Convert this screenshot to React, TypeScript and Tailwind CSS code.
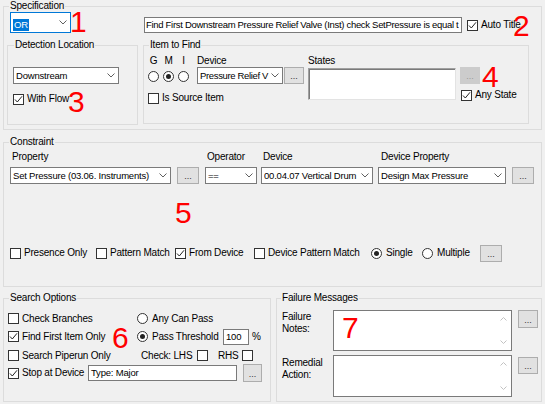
import React from "react";

const LBL = "text-[10px] leading-[12px] tracking-[-0.2px] whitespace-nowrap text-black";
const INP = "text-[9.5px] leading-[12px] tracking-[-0.2px] whitespace-nowrap text-black";

function Chevron() {
  return (
    <svg width="8" height="5" viewBox="0 0 8 5" className="shrink-0">
      <path d="M0.5 0.5L4 4L7.5 0.5" fill="none" stroke="#606060" strokeWidth="1" />
    </svg>
  );
}

function Combo({ cls, text, textCls = "" }: { cls: string; text: string; textCls?: string }) {
  return (
    <div className={`${cls} shrink-0 bg-white border border-[#7a7a7a] flex items-center pl-[2px] pr-[3px] gap-[2px]`}>
      <span className={`${INP} ${textCls} flex-1 min-w-0 overflow-hidden`}>{text}</span>
      <Chevron />
    </div>
  );
}

function Dots({ cls, disabled }: { cls: string; disabled?: boolean }) {
  return (
    <div
      className={`${cls} shrink-0 border flex items-center justify-center pt-[2px] text-[9px] leading-[9px] ${
        disabled ? "bg-[#cccccc] border-[#cccccc] text-[#9a9a9a]" : "bg-[#e1e1e1] border-[#adadad] text-[#333]"
      }`}
    >
      ...
    </div>
  );
}

function Box({ checked }: { checked?: boolean }) {
  return (
    <div className="w-[11px] h-[11px] shrink-0 bg-white border border-[#333] flex items-center justify-center">
      {checked && (
        <svg width="9" height="9" viewBox="0 0 9 9">
          <path d="M1 4.5L3.3 7L8 1.3" fill="none" stroke="#222" strokeWidth="1" />
        </svg>
      )}
    </div>
  );
}

function Radio({ checked }: { checked?: boolean }) {
  return (
    <div className="w-[11px] h-[11px] shrink-0 rounded-full bg-white border border-[#333] flex items-center justify-center">
      {checked && <div className="w-[5px] h-[5px] rounded-full bg-[#222]" />}
    </div>
  );
}

function CheckItem({ cls = "", label, checked }: { cls?: string; label: string; checked?: boolean }) {
  return (
    <div className={`${cls} shrink-0 flex items-center gap-[3px]`}>
      <Box checked={checked} />
      <span className={LBL}>{label}</span>
    </div>
  );
}

function RadioItem({ cls = "", label, checked }: { cls?: string; label: string; checked?: boolean }) {
  return (
    <div className={`${cls} shrink-0 flex items-center gap-[4px]`}>
      <Radio checked={checked} />
      <span className={LBL}>{label}</span>
    </div>
  );
}

function Group({ title, cls, legendCls = "ml-[5px]", children }: { title: string; cls: string; legendCls?: string; children?: React.ReactNode }) {
  return (
    <fieldset className={`${cls} shrink-0 min-w-0 border border-[#dcdcdc]`}>
      <legend className={`${LBL} ${legendCls} px-[1px]`}>{title}</legend>
      {children}
    </fieldset>
  );
}

function ScrollText({ cls }: { cls: string }) {
  return (
    <div className={`${cls} shrink-0 bg-white border border-[#7a7a7a] flex justify-end`}>
      <div className="w-[15px] flex flex-col items-center justify-between py-[6px]">
        <svg width="7" height="4" viewBox="0 0 7 4">
          <path d="M0.5 3.5L3.5 0.5L6.5 3.5" fill="none" stroke="#c2c2c2" strokeWidth="1" />
        </svg>
        <svg width="7" height="4" viewBox="0 0 7 4">
          <path d="M0.5 0.5L3.5 3.5L6.5 0.5" fill="none" stroke="#c2c2c2" strokeWidth="1" />
        </svg>
      </div>
    </div>
  );
}

function Mark({ cls, n }: { cls: string; n: string }) {
  return (
    <div className={`${cls} absolute text-[30px] leading-[30px] text-[#ff0000] font-['Liberation_Sans',Arial,sans-serif] pointer-events-none`}>
      {n}
    </div>
  );
}

export default function App() {
  return (
    <div className="w-[545px] h-[404px] bg-[#f0f0f0] overflow-hidden relative pl-[3px] font-['Liberation_Sans',Arial,sans-serif] text-black">
      {/* Specification */}
      <Group title="Specification" cls="w-[539px] h-[130px]">
        <div className="flex items-start">
          <div className="ml-[6px] w-[61px] h-[21px] shrink-0 bg-white border border-[#0078d7] flex items-center pl-[2px] pr-[3px]">
            <div className="flex-1">
              <span className={`${INP} inline-block bg-[#0078d7] text-white px-[1px]`}>OR</span>
            </div>
            <Chevron />
          </div>
          <div className="ml-[73px] mt-[5px] w-[318px] h-[16px] shrink-0 bg-white border border-[#7a7a7a] pl-[1px] overflow-hidden flex items-center">
            <span className={`${INP} tracking-[-0.3px]`}>
              Find First Downstream Pressure Relief Valve (Inst) check SetPressure is equal t
            </span>
          </div>
          <CheckItem cls="ml-[5px] mt-[7px]" label="Auto Title" checked />
        </div>
        <div className="flex mt-[6px]">
          <Group title="Detection Location" cls="ml-[3px] w-[131px] h-[86px]" legendCls="ml-[6px]">
            <div className="flex flex-col">
              <Combo cls="ml-[5px] mt-[16px] w-[106px] h-[17px]" text="Downstream" />
              <CheckItem cls="ml-[5px] mt-[9px]" label="With Flow" checked />
            </div>
          </Group>
          <Group title="Item to Find" cls="ml-[5px] w-[386px] h-[85px]">
            <div className="flex pt-[4px]">
              <div className="ml-[4px] w-[160px] shrink-0 flex flex-col">
                <div className="flex">
                  <div className="w-[49px] shrink-0 flex flex-col">
                    <div className="flex gap-[4px]">
                      <span className={`${LBL} w-[11px] text-center`}>G</span>
                      <span className={`${LBL} w-[11px] text-center`}>M</span>
                      <span className={`${LBL} w-[11px] text-center`}>I</span>
                    </div>
                    <div className="flex gap-[4px] mt-[4px]">
                      <Radio />
                      <Radio checked />
                      <Radio />
                    </div>
                  </div>
                  <div className="flex flex-col">
                    <span className={LBL}>Device</span>
                    <div className="flex">
                      <Combo cls="w-[86px] h-[17px]" text="Pressure Relief V" textCls="tracking-[-0.35px]" />
                      <Dots cls="ml-[1px] w-[20px] h-[17px]" />
                    </div>
                  </div>
                </div>
                <CheckItem cls="mt-[8px]" label="Is Source Item" />
              </div>
              <div className="w-[148px] shrink-0 flex flex-col">
                <span className={LBL}>States</span>
                <div className="mt-[1px] h-[32px] bg-white border border-[#a0a0a0] border-r-[#e3e3e3] border-b-[#e3e3e3] shadow-[inset_1px_1px_0_#7a7a7a]" />
              </div>
              <div className="ml-[4px] flex flex-col">
                <Dots cls="mt-[12px] w-[20px] h-[17px]" disabled />
                <CheckItem cls="ml-[1px] mt-[5px]" label="Any State" checked />
              </div>
            </div>
          </Group>
        </div>
      </Group>

      {/* Constraint */}
      <Group title="Constraint" cls="mt-[6px] w-[539px] h-[151px]">
        <div className="flex mt-[3px]">
          <div className="ml-[6px] flex flex-col shrink-0">
            <span className={`${LBL} pl-[2px]`}>Property</span>
            <Combo cls="mt-[4px] w-[161px] h-[17px]" text="Set Pressure (03.06. Instruments)" />
          </div>
          <Dots cls="ml-[6px] mt-[16px] w-[22px] h-[17px]" />
          <div className="ml-[6px] flex flex-col shrink-0">
            <span className={`${LBL} pl-[2px]`}>Operator</span>
            <Combo cls="mt-[4px] w-[52px] h-[17px]" text="==" />
          </div>
          <div className="ml-[4px] flex flex-col shrink-0">
            <span className={`${LBL} pl-[2px]`}>Device</span>
            <Combo cls="mt-[4px] w-[112px] h-[17px]" text="00.04.07 Vertical Drum" />
          </div>
          <div className="ml-[5px] flex flex-col shrink-0">
            <span className={`${LBL} pl-[3px]`}>Device Property</span>
            <Combo cls="mt-[4px] w-[128px] h-[17px]" text="Design Max Pressure" />
          </div>
          <Dots cls="ml-[6px] mt-[16px] w-[22px] h-[17px]" />
        </div>
        <div className="flex items-center mt-[59px] h-[20px]">
          <CheckItem cls="ml-[6px] w-[86px]" label="Presence Only" />
          <CheckItem cls="w-[79px]" label="Pattern Match" />
          <CheckItem cls="w-[79px]" label="From Device" checked />
          <CheckItem cls="w-[117px]" label="Device Pattern Match" />
          <RadioItem cls="w-[51px]" label="Single" checked />
          <RadioItem cls="w-[58px]" label="Multiple" />
          <Dots cls="w-[22px] h-[17px]" />
        </div>
      </Group>

      <div className="flex mt-[5px]">
        {/* Search Options */}
        <Group title="Search Options" cls="w-[268px] h-[110px]">
          <div className="flex flex-col">
            <div className="flex items-center h-[17px] mt-[6px]">
              <CheckItem cls="ml-[4px] w-[129px]" label="Check Branches" />
              <RadioItem label="Any Can Pass" />
            </div>
            <div className="flex items-center h-[17px] mt-[1px]">
              <CheckItem cls="ml-[4px] w-[129px]" label="Find First Item Only" checked />
              <RadioItem cls="w-[86px]" label="Pass Threshold" checked />
              <div className="w-[26px] h-[16px] shrink-0 bg-white border border-[#7a7a7a] pl-[2px] flex items-center">
                <span className={INP}>100</span>
              </div>
              <span className={`${LBL} ml-[3px]`}>%</span>
            </div>
            <div className="flex items-center h-[17px] mt-[2px]">
              <CheckItem cls="ml-[4px] w-[129px]" label="Search Piperun Only" />
              <span className={`${LBL} ml-[4px] w-[56px] shrink-0`}>Check: LHS</span>
              <Box />
              <span className={`${LBL} ml-[10px] w-[24px] shrink-0`}>RHS</span>
              <Box />
            </div>
            <div className="flex items-center h-[18px]">
              <CheckItem cls="ml-[4px] w-[80px]" label="Stop at Device" checked />
              <div className="w-[149px] h-[16px] shrink-0 bg-white border border-[#7a7a7a] pl-[2px] flex items-center">
                <span className={INP}>Type: Major</span>
              </div>
              <Dots cls="ml-[6px] w-[19px] h-[18px]" />
            </div>
          </div>
        </Group>

        {/* Failure Messages */}
        <Group title="Failure Messages" cls="ml-[5px] w-[266px] h-[110px]" legendCls="ml-[4px]">
          <div className="flex flex-col">
            <div className="flex mt-[6px]">
              <div className={`${LBL} ml-[5px] mt-[1px] w-[51px] shrink-0`}>
                Failure
                <br />
                Notes:
              </div>
              <ScrollText cls="w-[179px] h-[41px]" />
              <Dots cls="ml-[6px] w-[20px] h-[18px]" />
            </div>
            <div className="flex mt-[4px]">
              <div className={`${LBL} ml-[5px] mt-[2px] w-[51px] shrink-0`}>
                Remedial
                <br />
                Action:
              </div>
              <ScrollText cls="w-[179px] h-[42px]" />
              <Dots cls="ml-[6px] mt-[2px] w-[20px] h-[17px]" />
            </div>
          </div>
        </Group>
      </div>

      <Mark cls="left-[70px] top-[7px]" n="1" />
      <Mark cls="left-[513px] top-[11px]" n="2" />
      <Mark cls="left-[68px] top-[87px]" n="3" />
      <Mark cls="left-[482px] top-[62px]" n="4" />
      <Mark cls="left-[175px] top-[198px]" n="5" />
      <Mark cls="left-[112px] top-[323px]" n="6" />
      <Mark cls="left-[342px] top-[313px]" n="7" />
    </div>
  );
}
